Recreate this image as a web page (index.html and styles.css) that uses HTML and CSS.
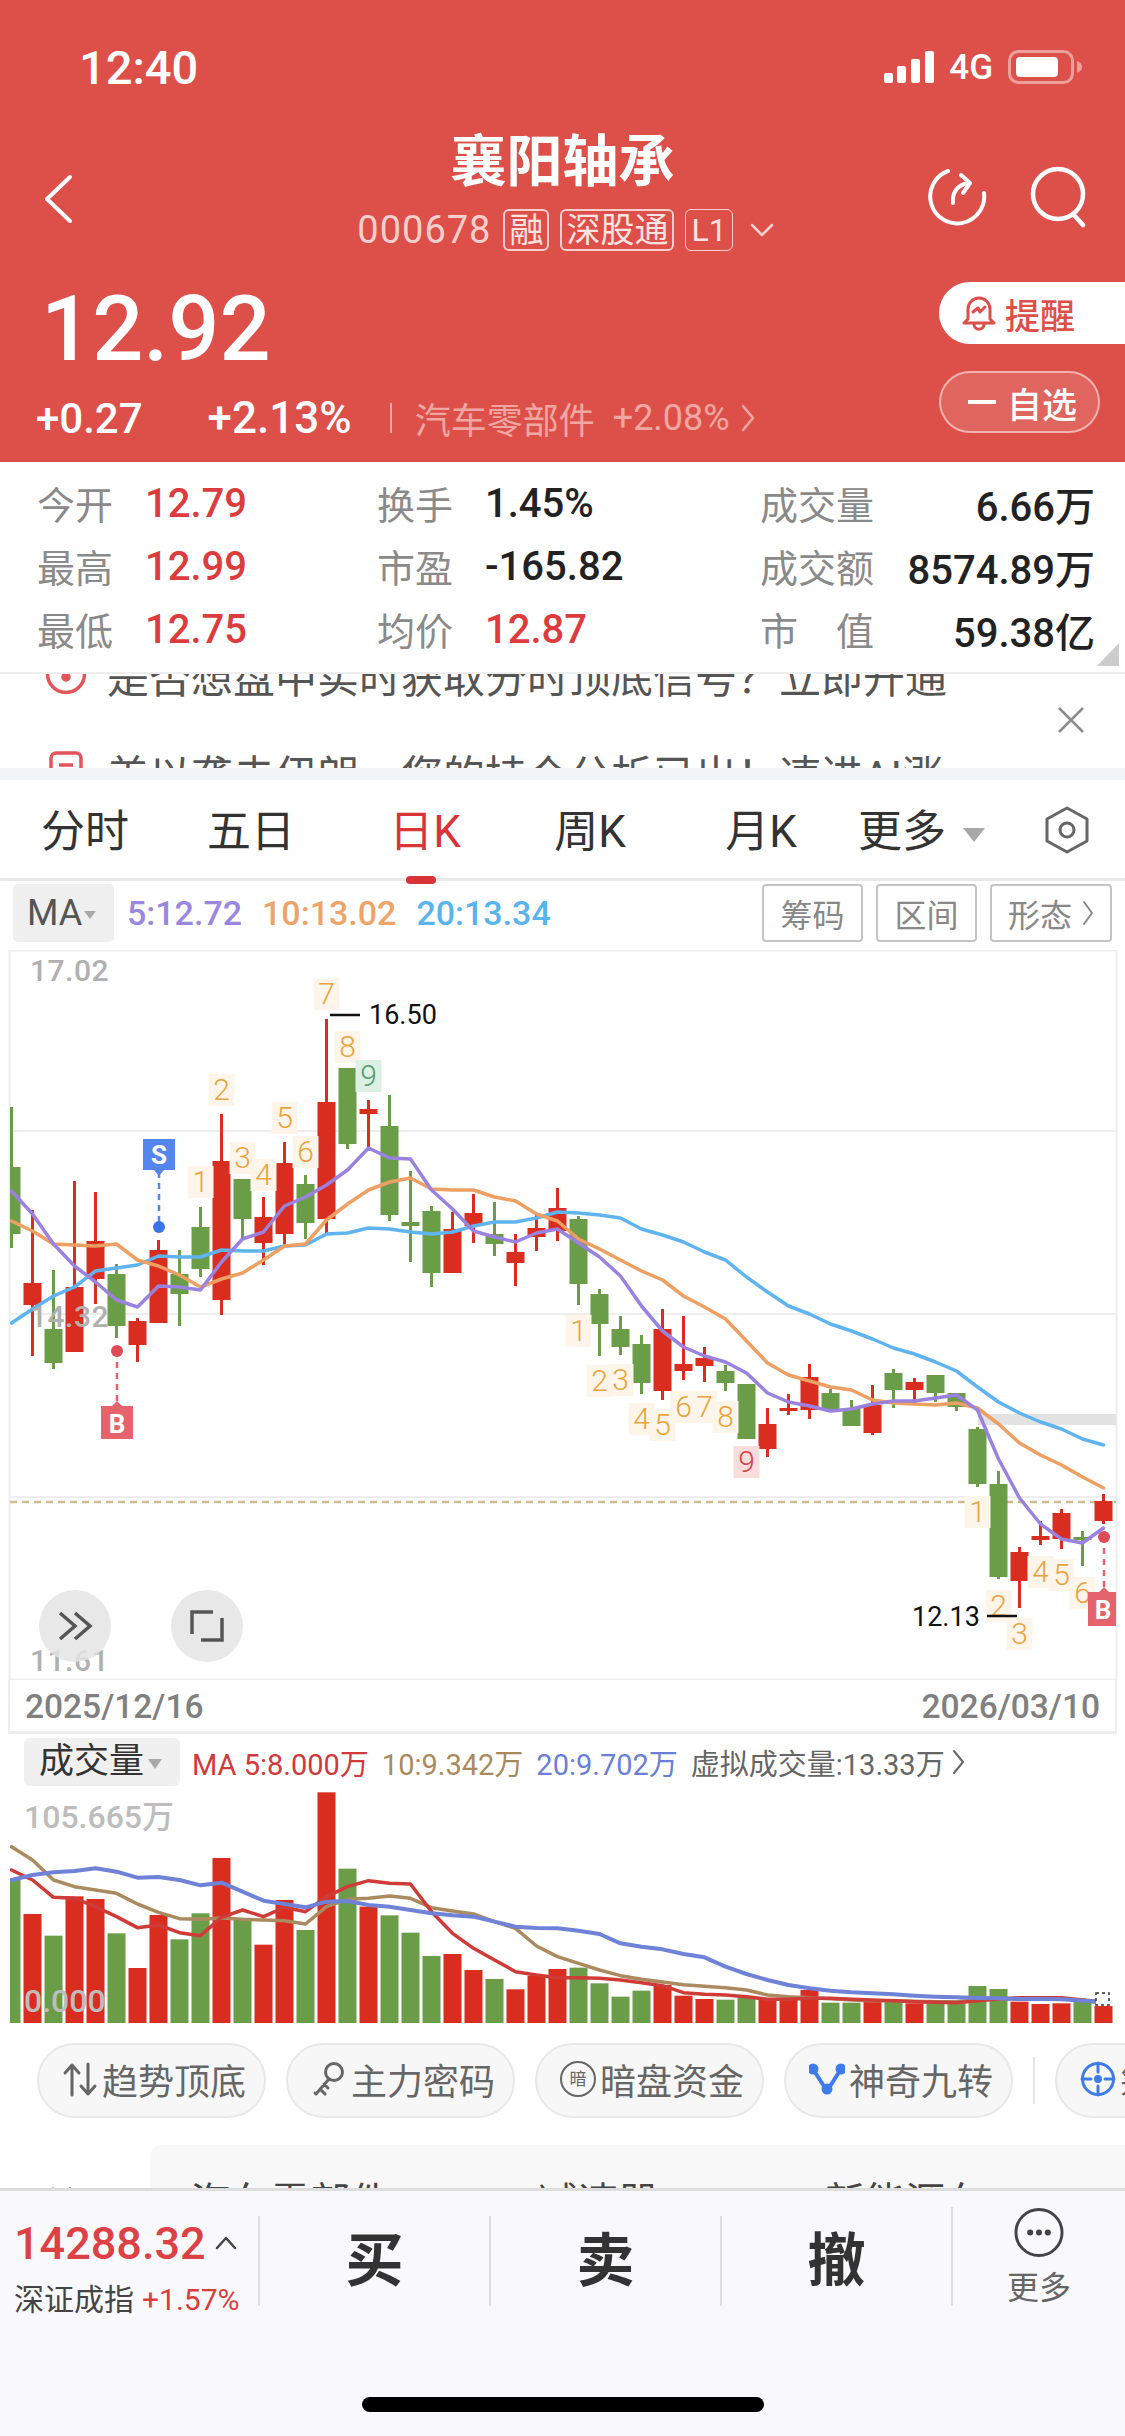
FILE: index.html
```html
<!DOCTYPE html>
<html lang="zh-CN">

<head>
    <meta charset="UTF-8">
    <meta name="viewport" content="width=device-width, initial-scale=1.0">
    <title>襄阳轴承</title>
    <link rel="stylesheet" href="styles.css">
</head>

<body>
    <div class="screen">
        <!-- Red header -->
        <header class="header">
            <div class="statusbar">
                <span class="clock">12:40</span>
                <div class="status-icons">
                    <svg width="50" height="32" viewBox="0 0 50 32" fill="#fff">
                        <rect x="0" y="22" width="9" height="10" rx="2" />
                        <rect x="13" y="15" width="9" height="17" rx="2" />
                        <rect x="27" y="8" width="9" height="24" rx="2" />
                        <rect x="41" y="0" width="9" height="32" rx="2" />
                    </svg>
                    <span class="network">4G</span>
                    <svg width="74" height="34" viewBox="0 0 74 34">
                        <rect x="1.5" y="1.5" width="63" height="31" rx="9" fill="none" stroke="#fff" stroke-opacity=".45" stroke-width="3" />
                        <rect x="8" y="7" width="42" height="20" rx="4" fill="#fff" />
                        <path d="M69 11c3 1 5 3 5 6s-2 5-5 6z" fill="#fff" fill-opacity=".45" />
                    </svg>
                </div>
            </div>

            <div class="navbar">
                <div class="nav-left">
                    <svg width="30" height="50" viewBox="0 0 30 50" fill="none" stroke="#fff" stroke-width="4" stroke-linecap="round" stroke-linejoin="round">
                        <path d="M27 3 4 25l23 22" />
                    </svg>
                </div>
                <div class="nav-title">
                    <h1 class="stock-name">襄阳轴承</h1>
                    <div class="stock-sub">
                        <span class="stock-code">000678</span>
                        <span class="tag">融</span>
                        <span class="tag">深股通</span>
                        <span class="tag tag-level">L1</span>
                        <svg width="24" height="14" viewBox="0 0 24 14" fill="none" stroke="#f6cfcc" stroke-width="2.5" stroke-linecap="round" stroke-linejoin="round">
                            <path d="M2 2l10 10L22 2" />
                        </svg>
                    </div>
                </div>
                <div class="nav-right">
                    <svg width="60" height="60" viewBox="0 0 60 60" fill="none" stroke="#fff" stroke-width="4" stroke-linecap="round" stroke-linejoin="round">
                        <path d="M21 5A27 27 0 1 0 57 27" />
                        <path d="M26 37c-1-10 4-18 15-20" />
                        <path d="M34 9l9 8-7 10" />
                    </svg>
                    <svg width="60" height="62" viewBox="0 0 60 62" fill="none" stroke="#fff" stroke-width="4.5" stroke-linecap="round">
                        <circle cx="29" cy="28" r="25" />
                        <path d="M44 48l10 11" />
                    </svg>
                </div>
            </div>

            <div class="quote">
                <div class="quote-main">
                    <div class="price">12.92</div>
                    <div class="change-row">
                        <span class="change">+0.27</span>
                        <span class="change change-pct">+2.13%</span>
                        <span class="sector-line"></span>
                        <span class="sector">汽车零部件</span>
                        <span class="sector-pct">+2.08%</span>
                        <svg width="14" height="28" viewBox="0 0 14 28" fill="none" stroke="#f0a7a3" stroke-width="2.5" stroke-linecap="round" stroke-linejoin="round">
                            <path d="M2 2l10 12L2 26" />
                        </svg>
                    </div>
                </div>
                <div class="quote-actions">
                    <button class="remind-btn">
                        <svg width="34" height="36" viewBox="0 0 34 36" fill="none" stroke="#dd5049" stroke-width="3" stroke-linecap="round" stroke-linejoin="round">
                            <path d="M6 24V14a11 11 0 0 1 22 0v10l4 4H2z" />
                            <path d="M12 29c0 7 10 7 10 0" />
                            <path d="M11 17l5-4 2 4 5-5" />
                        </svg>
                        提醒
                    </button>
                    <button class="watch-btn"><span class="watch-dash"></span>自选</button>
                </div>
            </div>
        </header>

        <!-- Quote numbers -->
        <section class="stats">
            <div class="stat"><span class="stat-label">今开</span><span class="stat-value up">12.79</span></div>
            <div class="stat"><span class="stat-label">换手</span><span class="stat-value">1.45%</span></div>
            <div class="stat stat-wide"><span class="stat-label">成交量</span><span class="stat-value">6.66万</span></div>
            <div class="stat"><span class="stat-label">最高</span><span class="stat-value up">12.99</span></div>
            <div class="stat"><span class="stat-label">市盈</span><span class="stat-value">-165.82</span></div>
            <div class="stat stat-wide"><span class="stat-label">成交额</span><span class="stat-value">8574.89万</span></div>
            <div class="stat"><span class="stat-label">最低</span><span class="stat-value up">12.75</span></div>
            <div class="stat"><span class="stat-label">均价</span><span class="stat-value up">12.87</span></div>
            <div class="stat stat-wide"><span class="stat-label stat-spread"><i>市</i><i>值</i></span><span class="stat-value">59.38亿</span></div>
            <span class="stats-corner"></span>
        </section>

        <!-- Scrolling notices, cut off top and bottom -->
        <section class="notices">
            <div class="notice-list">
                <div class="notice">
                    <svg width="42" height="42" viewBox="0 0 42 42" fill="none" stroke="#e2555a" stroke-width="3.5">
                        <circle cx="21" cy="21" r="18.5" />
                        <circle cx="21" cy="24" r="3" fill="#e2555a" />
                        <path d="M21 24 12 12M21 24l9-12" />
                    </svg>
                    <span>是否想盘中实时获取分时顶底信号？立即开通</span>
                </div>
                <div class="notice">
                    <svg width="42" height="42" viewBox="0 0 42 42" fill="none" stroke="#e2555a" stroke-width="3.5">
                        <rect x="6" y="2" width="30" height="38" rx="5" />
                        <path d="M14 14h14" />
                    </svg>
                    <span>美以袭击伊朗，您的持仓分析已出！速进AI涨</span>
                </div>
            </div>
            <svg class="notice-close" width="28" height="28" viewBox="0 0 28 28" fill="none" stroke="#8c8c8c" stroke-width="2.5">
                <path d="M2 2l24 24M26 2 2 26" />
            </svg>
        </section>

        <!-- Period tabs -->
        <nav class="tabs">
            <span class="tab">分时</span>
            <span class="tab">五日</span>
            <span class="tab active">日K</span>
            <span class="tab">周K</span>
            <span class="tab">月K</span>
            <span class="tab tab-more">更多<i class="caret caret-big"></i></span>
            <svg class="tab-gear" width="46" height="48" viewBox="0 0 46 48" fill="none" stroke="#666" stroke-width="3" stroke-linejoin="round">
                <path d="M23 2 43 13v22L23 46 3 35V13z" />
                <circle cx="23" cy="24" r="7" />
            </svg>
        </nav>

        <div class="ma-row">
            <span class="ma-pill">MA<i class="caret"></i></span>
            <span class="ma-value ma5">5:12.72</span>
            <span class="ma-value ma10">10:13.02</span>
            <span class="ma-value ma20">20:13.34</span>
            <div class="ma-tools">
                <span class="ma-tool">筹码</span>
                <span class="ma-tool">区间</span>
                <span class="ma-tool ma-tool-wide">形态
                    <svg width="12" height="26" viewBox="0 0 12 26" fill="none" stroke="#888" stroke-width="2" stroke-linecap="round" stroke-linejoin="round"><path d="M2 2l8 11L2 24" /></svg>
                </span>
            </div>
        </div>

        <!-- Candles -->
        <svg id="kline" class="chart" width="1125" height="730" viewBox="0 950 1125 730">
            <defs>
                <clipPath id="kline-clip"><rect x="10" y="950" width="1106" height="730" /></clipPath>
            </defs>
            <rect class="frame" x="9.5" y="950.5" width="1107" height="729" />
            <path class="grid" d="M10 1131H1116M10 1314H1116M10 1497H1116" />
            <rect class="band" x="978" y="1414" width="138" height="11" />
            <path class="last-price" d="M10 1502H1116" />
            <g id="kline-candles" clip-path="url(#kline-clip)"></g>
            <g id="kline-lines" clip-path="url(#kline-clip)"></g>
            <g id="kline-marks"></g>

            <text class="axis-label" x="30" y="981">17.02</text>
            <text class="axis-label" x="30" y="1327">14.32</text>
            <text class="axis-label" x="30" y="1671">11.61</text>

            <path class="extreme-tick" d="M330 1015H360M987 1616H1017" />
            <text class="extreme" x="369" y="1024">16.50</text>
            <text class="extreme" x="912" y="1626">12.13</text>

            <!-- S / B flags -->
            <path class="flag-line flag-line-s" d="M159 1172V1227" />
            <circle class="dot-s" cx="159" cy="1227" r="6" />
            <path class="flag-s" d="M143 1139H175V1170H164L159 1176 154 1170H143Z" />
            <text class="flag-text" x="159" y="1164">S</text>

            <path class="flag-line flag-line-b" d="M117 1351V1406" />
            <circle class="dot-b" cx="117" cy="1351" r="6" />
            <path class="flag-b" d="M101 1406H112L117 1401 122 1406H133V1439H101Z" />
            <text class="flag-text" x="117" y="1433">B</text>

            <path class="flag-line flag-line-b" d="M1104 1537V1592" />
            <circle class="dot-b" cx="1104" cy="1537" r="6" />
            <path class="flag-b" d="M1088 1592H1099L1104 1587 1109 1592H1116V1626H1088Z" />
            <text class="flag-text" x="1103" y="1619">B</text>

            <!-- Round buttons over the chart -->
            <ellipse class="round-btn" cx="75" cy="1626" rx="36" ry="36" />
            <path class="round-icon" d="M60 1613l15 13-15 13M75 1613l15 13-15 13" />
            <ellipse class="round-btn" cx="207" cy="1626" rx="36" ry="36" />
            <path class="round-icon" d="M213 1612H192V1634M201 1640H222V1618" />
        </svg>

        <div class="dates">
            <span>2025/12/16</span>
            <span>2026/03/10</span>
        </div>

        <!-- Volume -->
        <div class="vol-row">
            <span class="vol-pill">成交量<i class="caret"></i></span>
            <span class="vol-ma vol-ma5">MA 5:8.000万</span>
            <span class="vol-ma vol-ma10">10:9.342万</span>
            <span class="vol-ma vol-ma20">20:9.702万</span>
            <span class="vol-ma vol-virtual">虚拟成交量:13.33万</span>
            <svg width="14" height="26" viewBox="0 0 14 26" fill="none" stroke="#666" stroke-width="2" stroke-linecap="round" stroke-linejoin="round"><path d="M2 2l9 11-9 11" /></svg>
        </div>

        <svg id="volume" class="chart" width="1125" height="240" viewBox="0 1790 1125 240">
            <defs>
                <clipPath id="volume-clip"><rect x="10" y="1790" width="1106" height="240" /></clipPath>
            </defs>
            <g id="volume-bars" clip-path="url(#volume-clip)"></g>
            <g id="volume-lines" clip-path="url(#volume-clip)"></g>
            <text class="vol-axis" x="24" y="1828">105.665万</text>
            <text class="vol-axis" x="24" y="2012">0.000</text>
            <rect class="vol-end" x="1096" y="1993" width="13" height="12" />
        </svg>

        <div class="lower">
            <div class="chips">
                <span class="chip">
                    <svg width="36" height="36" viewBox="0 0 36 36" fill="none" stroke="#666" stroke-width="3" stroke-linecap="round" stroke-linejoin="round">
                        <path d="M10 34V5M3 12l7-8 7 8" />
                        <path d="M26 3v29M19 25l7 8 7-8" />
                    </svg>
                    趋势顶底
                </span>
                <span class="chip">
                    <svg width="36" height="36" viewBox="0 0 36 36" fill="none" stroke="#666" stroke-width="3" stroke-linecap="round" stroke-linejoin="round">
                        <circle cx="23" cy="11" r="8.5" />
                        <path d="M18 18 5 33M9 28l5 5M5 33l-1-1M13 23l4 4" />
                    </svg>
                    主力密码
                </span>
                <span class="chip">
                    <span class="chip-seal">暗</span>
                    暗盘资金
                </span>
                <span class="chip">
                    <svg width="36" height="36" viewBox="0 0 36 36" fill="none" stroke="#3f7ce8" stroke-width="4" stroke-linecap="round" stroke-linejoin="round">
                        <path d="M4 8l14 22L32 8" />
                        <circle cx="4" cy="8" r="3.5" fill="#3f7ce8" />
                        <circle cx="32" cy="8" r="3.5" fill="#3f7ce8" />
                        <circle cx="18" cy="28" r="3.5" fill="#3f7ce8" />
                    </svg>
                    神奇九转
                </span>
                <span class="chips-line"></span>
                <span class="chip">
                    <svg width="36" height="36" viewBox="0 0 36 36" fill="none" stroke="#3f7ce8" stroke-width="3" stroke-linecap="round">
                        <circle cx="18" cy="18" r="15.5" />
                        <path d="M18 2v9M18 25v9M2 18h9M25 18h9" />
                        <circle cx="18" cy="18" r="2.5" fill="#3f7ce8" />
                    </svg>
                    筹码分布
                </span>
            </div>
            <div class="related">
                <span class="related-title">所属</span>
                <div class="related-panel">
                    <span class="related-1">汽车零部件</span>
                    <span class="related-2">减速器</span>
                    <span class="related-3">新能源车</span>
                </div>
            </div>
        </div>

        <!-- Trade bar -->
        <footer class="tradebar">
            <div class="trade-row">
                <div class="index-box">
                    <div class="index-top">14288.32
                        <svg width="22" height="14" viewBox="0 0 22 14" fill="none" stroke="#444" stroke-width="2.5" stroke-linecap="round" stroke-linejoin="round"><path d="M2 12 11 2l9 10" /></svg>
                    </div>
                    <div class="index-bottom"><span>深证成指</span><span class="up">+1.57%</span></div>
                </div>
                <div class="trade-btn">买</div>
                <div class="trade-btn">卖</div>
                <div class="trade-btn">撤</div>
                <div class="trade-more">
                    <svg width="52" height="52" viewBox="0 0 52 52" fill="none" stroke="#444" stroke-width="3">
                        <circle cx="26" cy="26" r="23.5" />
                        <circle cx="17" cy="26" r="1.6" fill="#444" />
                        <circle cx="26" cy="26" r="1.6" fill="#444" />
                        <circle cx="35" cy="26" r="1.6" fill="#444" />
                    </svg>
                    <span>更多</span>
                </div>
            </div>
            <div class="home-bar"></div>
        </footer>
    </div>

    <script src="chart.js"></script>
</body>
</html>
```

FILE: styles.css
```css
* {
    box-sizing: border-box;
}

body {
    margin: 0;
    background-color: #fff;
    font-family: Roboto, "Noto Sans CJK SC", sans-serif;
}

i {
    font-style: normal;
}

.screen {
    width: 1125px;
    height: 2436px;
    overflow: hidden;
    display: flex;
    flex-direction: column;
}

.up {
    color: #dc3c3e;
}

.caret {
    display: inline-block;
    border-left: 7px solid transparent;
    border-right: 7px solid transparent;
    border-top: 10px solid #a8a8a8;
    margin-left: 5px;
    vertical-align: middle;
}

.caret-big {
    border-left-width: 11px;
    border-right-width: 11px;
    border-top-width: 14px;
    margin-left: 17px;
}

/* Header */
.header {
    height: 462px;
    flex: none;
    background-color: #dd5049;
    color: #fff;
}

.statusbar {
    height: 134px;
    display: flex;
    justify-content: space-between;
    align-items: center;
    padding: 0 43px 0 79px;
}

.clock {
    font-size: 47px;
    font-weight: 500;
}

.status-icons {
    display: flex;
    align-items: center;
    gap: 15px;
}

.network {
    font-size: 35px;
    font-weight: 500;
}

.navbar {
    height: 132px;
    display: grid;
    grid-template-columns: 1fr auto 1fr;
}

.nav-left {
    padding: 40px 0 0 43px;
}

.nav-right {
    display: flex;
    justify-content: flex-end;
    gap: 42px;
    padding: 32px 36px 0 0;
}

.nav-title {
    display: flex;
    flex-direction: column;
    align-items: center;
}

.stock-name {
    margin: 0;
    font-size: 56px;
    line-height: 56px;
    font-weight: 700;
}

.stock-sub {
    display: flex;
    align-items: center;
    gap: 11px;
    margin: 18px 0 0 6px;
    color: #f6cfcc;
}

.stock-code {
    margin-right: 1px;
    font-size: 38px;
    letter-spacing: 1px;
}

.tag {
    height: 42px;
    line-height: 38px;
    padding: 0 4px;
    border: 2px solid #f6cfcc;
    border-radius: 6px;
    font-size: 34px;
    color: #fbe3e1;
}

.tag-level {
    font-size: 32px;
    padding: 0 5px;
    border-width: 1px;
    line-height: 40px;
    margin-right: 6px;
}

.quote {
    height: 196px;
    display: flex;
    justify-content: space-between;
}

.quote-main {
    padding: 19px 0 0 36px;
}

.price {
    margin-left: 5px;
    font-size: 90px;
    line-height: 90px;
    font-weight: 500;
}

.change-row {
    display: flex;
    align-items: center;
    height: 46px;
    margin-top: 20px;
}

.change {
    font-size: 42px;
    font-weight: 500;
}

.change-pct {
    margin-left: 65px;
    font-size: 44px;
}

.sector-line {
    width: 2px;
    height: 30px;
    margin: 0 23px 0 38px;
    background-color: #f0a7a3;
}

.sector {
    font-size: 36px;
    color: #f0a7a3;
}

.sector-pct {
    margin: 0 11px 0 18px;
    font-size: 36px;
    color: #f0a7a3;
}

.quote-actions {
    width: 186px;
    padding-top: 16px;
}

.remind-btn,
.watch-btn {
    display: flex;
    align-items: center;
    height: 62px;
    padding: 0;
    font-family: inherit;
    font-size: 35px;
    font-weight: 500;
}

.remind-btn {
    width: 186px;
    gap: 9px;
    padding-left: 23px;
    border: none;
    border-radius: 31px 0 0 31px;
    background-color: #fff;
    color: #dd5049;
}

.watch-btn {
    width: 161px;
    margin-top: 27px;
    padding-left: 27px;
    border: 2px solid rgba(255, 255, 255, 0.5);
    border-radius: 31px;
    background-color: rgba(255, 255, 255, 0.12);
    color: #fff;
}

.watch-dash {
    width: 28px;
    height: 4px;
    margin-right: 11px;
    background-color: #fff;
}

/* Stats */
.stats {
    position: relative;
    height: 212px;
    flex: none;
    display: grid;
    grid-template-columns: 340px 383px 1fr;
    grid-auto-rows: 63px;
    padding: 10px 30px 0 37px;
    border-bottom: 2px solid #eee;
}

.stat {
    display: flex;
    align-items: center;
}

.stat-label {
    width: 108px;
    margin-top: -3px;
    font-size: 38px;
    color: #8a8a8a;
}

.stat-wide .stat-label {
    width: 114px;
}

.stat-spread {
    display: flex;
    justify-content: space-between;
}

.stat-value {
    font-size: 40px;
    font-weight: 500;
    color: #222;
}

.stat-value.up {
    color: #dc3c3e;
}

.stat-wide .stat-value {
    margin-left: auto;
}

.stats-corner {
    position: absolute;
    right: 6px;
    bottom: 6px;
    border-left: 22px solid transparent;
    border-bottom: 23px solid #ccc;
}

/* Notices */
.notices {
    position: relative;
    height: 94px;
    flex: none;
    overflow: hidden;
}

.notice-list {
    margin-top: -49px;
}

.notice {
    display: flex;
    align-items: center;
    gap: 20px;
    height: 98px;
    padding-left: 45px;
    font-size: 42px;
    color: #555;
    white-space: nowrap;
}

.notice-close {
    position: absolute;
    top: 32px;
    right: 40px;
}

/* Tabs */
.tabs {
    position: relative;
    height: 113px;
    flex: none;
    display: grid;
    grid-template-columns: 170px 162px 186px 144px 198px 1fr;
    align-items: center;
    padding-bottom: 3px;
    border-top: 12px solid #f2f3f5;
    border-bottom: 3px solid #e8e8e8;
    font-size: 44px;
    color: #333;
}

.tab {
    position: relative;
    text-align: center;
}

.tab.active {
    color: #d8343a;
}

.tab.active::after {
    content: "";
    position: absolute;
    left: 74px;
    bottom: -24px;
    width: 30px;
    height: 8px;
    border-radius: 4px;
    background-color: #d8343a;
}

.tab-more {
    margin-left: -2px;
    text-align: left;
}

.tab-gear {
    position: absolute;
    top: 26px;
    right: 35px;
}

.ma-row {
    height: 69px;
    flex: none;
    display: flex;
    align-items: center;
    padding: 0 13px 5px;
}

.ma-pill {
    width: 101px;
    height: 58px;
    line-height: 58px;
    padding-left: 14px;
    border-radius: 5px;
    background-color: #efefef;
    font-size: 36px;
    color: #555;
    white-space: nowrap;
}

.ma-pill .caret {
    margin-left: 2px;
    border-left-width: 6px;
    border-right-width: 6px;
    border-top-width: 8px;
}

.ma-value {
    font-size: 34px;
    font-weight: 500;
}

.ma5 {
    margin-left: 13px;
    color: #9a88e0;
}

.ma10 {
    margin-left: 20px;
    color: #eda46a;
}

.ma20 {
    margin-left: 20px;
    color: #58b4ec;
}

.ma-tools {
    display: flex;
    gap: 13px;
    margin-left: auto;
}

.ma-tool {
    display: flex;
    align-items: center;
    justify-content: center;
    gap: 10px;
    width: 101px;
    height: 58px;
    border: 2px solid #c4c4c4;
    border-radius: 4px;
    font-size: 32px;
    color: #888;
}

.ma-tool-wide {
    width: 122px;
}

/* Charts */
.chart {
    display: block;
    flex: none;
}

.frame {
    fill: none;
    stroke: #eee;
    stroke-width: 2;
}

.grid {
    fill: none;
    stroke: #eee;
    stroke-width: 2;
}

.band {
    fill: #e2e2e2;
}

.last-price {
    fill: none;
    stroke: #cdbb94;
    stroke-width: 2.5;
    stroke-dasharray: 7 5;
}

.wick-r,
.body-r {
    stroke: #d92d20;
    fill: #d92d20;
}

.wick-g,
.body-g {
    stroke: #6b9d49;
    fill: #6b9d49;
}

.wick-r,
.wick-g {
    stroke-width: 3;
}

.body-r,
.body-g {
    stroke: none;
}

.line {
    fill: none;
    stroke-width: 3.5;
    stroke-linejoin: round;
    stroke-linecap: round;
}

.line-ma5 {
    stroke: #9a82e0;
}

.line-ma10 {
    stroke: #ee9f62;
}

.line-ma20 {
    stroke: #5fb4f0;
}

.line-vol5 {
    stroke: #cf3b36;
}

.line-vol10 {
    stroke: #ab8a5f;
}

.line-vol20 {
    stroke: #6e82d8;
    stroke-width: 4;
}

.td-box {
    fill: #fdf5ea;
}

.td-num {
    fill: #eba33c;
    font-size: 30px;
    font-weight: 300;
    text-anchor: middle;
}

.td-green .td-box {
    fill: #dcf0e3;
}

.td-green .td-num {
    fill: #4f9f6e;
}

.td-red .td-box {
    fill: #fbdcdc;
}

.td-red .td-num {
    fill: #d6434a;
}

.axis-label {
    fill: #b0b0b0;
    font-size: 30px;
    font-weight: 500;
    letter-spacing: 0.5px;
}

.extreme {
    fill: #111;
    font-size: 27px;
}

.extreme-tick {
    stroke: #111;
    stroke-width: 2.5;
}

.flag-line {
    fill: none;
    stroke-width: 2.5;
    stroke-dasharray: 6 5;
}

.flag-line-s {
    stroke: #5585ee;
}

.flag-line-b {
    stroke: #e5636c;
}

.dot-s {
    fill: #3b74e8;
}

.dot-b {
    fill: #e04b58;
}

.flag-s {
    fill: #5585ee;
}

.flag-b {
    fill: #e5636c;
}

.flag-text {
    fill: #fff;
    font-size: 26px;
    font-weight: 700;
    text-anchor: middle;
}

.round-btn {
    fill: #e4e4e4;
    fill-opacity: 0.85;
}

.round-icon {
    fill: none;
    stroke: #555;
    stroke-width: 3.5;
}

.dates {
    height: 54px;
    flex: none;
    display: flex;
    justify-content: space-between;
    align-items: center;
    margin: 0 8px;
    padding: 2px 15px 0 15px;
    border: solid #eee;
    border-width: 0 2px 3px;
    font-size: 33.5px;
    font-weight: 500;
    color: #808080;
}

.vol-row {
    height: 56px;
    flex: none;
    display: flex;
    align-items: center;
    gap: 13px;
    padding: 0 0 0 24px;
}

.vol-pill {
    width: 156px;
    height: 48px;
    line-height: 48px;
    padding-left: 15px;
    border-radius: 6px;
    background-color: #f0f0f0;
    font-size: 35px;
    color: #333;
    white-space: nowrap;
}

.vol-pill .caret {
    margin-left: 4px;
}

.vol-ma {
    font-size: 29px;
    white-space: nowrap;
}

.vol-ma5 {
    margin-left: -1px;
    color: #d03a3a;
}

.vol-ma10 {
    color: #a98a5f;
}

.vol-ma20 {
    color: #6a7fd6;
}

.vol-virtual {
    color: #666;
}

.vol-row svg {
    margin-left: -6px;
}

.vol-bar-r {
    fill: #d92d20;
}

.vol-bar-g {
    fill: #6b9d49;
}

.vol-axis {
    fill: #bdbdbd;
    font-size: 32px;
    font-weight: 500;
}

.vol-end {
    fill: #fff;
    stroke: #333;
    stroke-width: 1.5;
    stroke-dasharray: 3 3;
}

/* Chips and what scrolls under the trade bar */
.lower {
    height: 158px;
    flex: none;
    overflow: hidden;
}

.chips {
    display: flex;
    align-items: center;
    gap: 20px;
    height: 88px;
    padding: 13px 0 0 37px;
    overflow: hidden;
}

.chip {
    flex: none;
    display: flex;
    align-items: center;
    gap: 4px;
    width: 229px;
    height: 75px;
    padding: 0 0 3px 23px;
    border: 2px solid #e8e8e8;
    border-radius: 38px;
    background-color: #f7f7f7;
    font-size: 36px;
    color: #666;
    white-space: nowrap;
}

.chip-seal {
    flex: none;
    width: 36px;
    height: 36px;
    line-height: 32px;
    border: 2px solid #666;
    border-radius: 50%;
    text-align: center;
    font-size: 17px;
}

.chips-line {
    flex: none;
    width: 2px;
    height: 47px;
    background-color: #e5e5e5;
}

.related {
    display: flex;
    margin-top: 27px;
    padding-left: 37px;
}

.related-title {
    width: 113px;
    padding-top: 30px;
    font-size: 38px;
    font-weight: 700;
    color: #222;
}

.related-panel {
    flex: 1;
    display: flex;
    height: 120px;
    padding: 25px 0 0 40px;
    border-radius: 12px 0 0 12px;
    background-color: #f8f8f8;
    font-size: 40px;
    color: #444;
}

.related-1 {
    width: 348px;
}

.related-2 {
    width: 287px;
}

/* Trade bar */
.tradebar {
    flex: 1;
    border-top: 3px solid #ddd;
    background-color: #f9f9fb;
}

.trade-row {
    display: flex;
    height: 90px;
    margin-top: 25px;
}

.index-box {
    width: 258px;
    padding-left: 14px;
    white-space: nowrap;
}

.index-top {
    display: flex;
    align-items: center;
    gap: 9px;
    height: 46px;
    margin-top: 4px;
    font-size: 45px;
    font-weight: 500;
    color: #dc4245;
}

.index-bottom {
    display: flex;
    gap: 8px;
    line-height: 34px;
    margin-top: 17px;
    font-size: 30px;
    color: #444;
}

.trade-btn {
    width: 231px;
    line-height: 90px;
    border-left: 2px solid #ddd;
    text-align: center;
    font-size: 58px;
    font-weight: 700;
    color: #333;
}

.trade-more {
    flex: 1;
    display: flex;
    flex-direction: column;
    align-items: center;
    gap: 12px;
    margin-top: -9px;
    border-left: 2px solid #ddd;
    font-size: 32px;
    line-height: 36px;
    color: #666;
}

.home-bar {
    width: 402px;
    height: 15px;
    margin: 91px auto 0;
    border-radius: 8px;
    background-color: #000;
}
```

FILE: chart.js
```js
const SVG_NS = "http://www.w3.org/2000/svg";

// [wick top, wick bottom, body top, body bottom, colour]
const candles = [
    [1107, 1248, 1167, 1234, "g"], [1210, 1356, 1283, 1305, "r"], [1270, 1369, 1329, 1363, "g"],
    [1181, 1352, 1287, 1352, "r"], [1192, 1304, 1241, 1279, "r"], [1264, 1338, 1274, 1326, "g"],
    [1318, 1362, 1321, 1345, "r"], [1240, 1323, 1250, 1323, "r"], [1250, 1326, 1274, 1294, "g"],
    [1207, 1277, 1227, 1269, "g"], [1114, 1315, 1161, 1300, "r"], [1179, 1240, 1179, 1219, "g"],
    [1197, 1265, 1217, 1243, "r"], [1142, 1245, 1163, 1234, "r"], [1175, 1239, 1184, 1223, "g"],
    [1019, 1234, 1102, 1219, "r"], [1068, 1149, 1068, 1144, "g"], [1100, 1148, 1109, 1114, "r"],
    [1095, 1221, 1126, 1215, "g"], [1171, 1262, 1222, 1226, "g"], [1206, 1287, 1211, 1273, "g"],
    [1212, 1273, 1229, 1273, "r"], [1194, 1243, 1213, 1226, "r"], [1202, 1256, 1234, 1244, "g"],
    [1234, 1286, 1252, 1263, "r"], [1214, 1251, 1228, 1237, "r"], [1188, 1241, 1208, 1231, "r"],
    [1216, 1305, 1219, 1284, "g"], [1289, 1356, 1294, 1324, "g"], [1316, 1355, 1329, 1347, "g"],
    [1335, 1394, 1344, 1383, "g"], [1309, 1400, 1329, 1391, "r"], [1316, 1380, 1364, 1371, "r"],
    [1347, 1382, 1358, 1366, "r"], [1365, 1391, 1371, 1383, "g"], [1384, 1439, 1384, 1439, "g"],
    [1408, 1457, 1424, 1449, "r"], [1394, 1415, 1408, 1411, "r"], [1364, 1419, 1377, 1410, "r"],
    [1389, 1411, 1393, 1410, "g"], [1400, 1426, 1408, 1426, "g"], [1385, 1435, 1405, 1433, "r"],
    [1369, 1408, 1373, 1390, "g"], [1378, 1404, 1382, 1390, "r"], [1375, 1402, 1375, 1393, "g"],
    [1393, 1411, 1393, 1407, "g"], [1427, 1487, 1429, 1484, "g"], [1471, 1579, 1484, 1577, "g"],
    [1547, 1608, 1552, 1581, "r"], [1521, 1545, 1536, 1540, "r"], [1509, 1549, 1513, 1539, "r"],
    [1531, 1566, 1537, 1540, "g"], [1494, 1524, 1501, 1521, "r"]
];

const ma5 = [1191, 1214, 1244, 1266, 1282, 1300, 1307, 1286, 1287, 1290, 1262, 1239, 1232, 1206, 1197, 1185, 1170, 1148,
    1158, 1159, 1190, 1209, 1231, 1237, 1242, 1233, 1229, 1243, 1257, 1276, 1306, 1331, 1347, 1356, 1362, 1373, 1393,
    1402, 1406, 1411, 1409, 1404, 1401, 1401, 1398, 1395, 1410, 1459, 1498, 1524, 1539, 1543, 1528];
const ma10 = [1221, 1231, 1244, 1245, 1246, 1244, 1260, 1266, 1275, 1287, 1279, 1273, 1260, 1246, 1244, 1220, 1204, 1190,
    1182, 1178, 1189, 1190, 1190, 1197, 1201, 1214, 1221, 1239, 1249, 1260, 1271, 1280, 1296, 1307, 1319, 1341, 1363,
    1375, 1381, 1387, 1390, 1400, 1403, 1404, 1405, 1403, 1408, 1424, 1443, 1455, 1465, 1477, 1488];
const ma20 = [1323, 1309, 1296, 1287, 1271, 1268, 1265, 1256, 1257, 1257, 1250, 1251, 1251, 1246, 1245, 1234, 1233, 1228,
    1229, 1232, 1234, 1232, 1226, 1222, 1222, 1218, 1212, 1213, 1215, 1218, 1229, 1235, 1242, 1252, 1260, 1277, 1292,
    1306, 1314, 1324, 1331, 1339, 1348, 1354, 1362, 1371, 1387, 1402, 1413, 1422, 1429, 1439, 1445];

// [candle index, y centre, number, tone]
const tdMarks = [
    [15, 994, 7], [16, 1047, 8], [17, 1076, 9, "green"], [10, 1090, 2], [9, 1182, 1], [11, 1158, 3], [12, 1175, 4],
    [13, 1118, 5], [14, 1152, 6], [27, 1331, 1], [28, 1381, 2], [29, 1380, 3], [30, 1419, 4], [31, 1425, 5],
    [32, 1407, 6], [33, 1407, 7], [34, 1417, 8], [35, 1462, 9, "red"], [46, 1512, 1], [47, 1606, 2], [48, 1634, 3],
    [49, 1572, 4], [50, 1575, 5], [51, 1593, 6]
];

// bar tops and volume averages, y counted from the volume chart's 1680 line at 3 units per px
const volTops = [600, 702, 767, 649, 657, 760, 864, 705, 778, 700, 534, 720, 794, 660, 750, 337, 566, 680, 706, 758, 828,
    822, 870, 897, 928, 887, 867, 863, 910, 950, 932, 915, 947, 957, 959, 950, 957, 957, 930, 968, 968, 960, 960, 970,
    970, 970, 918, 927, 965, 972, 970, 965, 978];
const vol5 = [570, 600, 652, 655, 680, 710, 743, 735, 758, 767, 712, 690, 710, 682, 695, 650, 620, 602, 610, 612, 695,
    760, 805, 840, 875, 885, 893, 893, 895, 900, 908, 917, 938, 943, 945, 950, 958, 958, 955, 955, 958, 960, 962, 965,
    967, 968, 962, 957, 953, 953, 953, 960, 970];
const vol10 = [500, 540, 600, 620, 630, 640, 672, 697, 716, 718, 714, 718, 720, 722, 732, 680, 658, 655, 648, 655, 683,
    693, 702, 725, 745, 798, 830, 850, 870, 887, 898, 906, 914, 919, 923, 930, 945, 950, 953, 956, 960, 962, 962, 964,
    965, 965, 960, 957, 957, 957, 957, 960, 965];
const vol20 = [600, 585, 577, 573, 565, 575, 593, 591, 600, 616, 608, 635, 662, 672, 682, 665, 663, 675, 680, 690, 700,
    706, 710, 725, 740, 744, 745, 752, 762, 790, 800, 808, 822, 832, 860, 882, 900, 915, 925, 932, 937, 940, 943, 947,
    950, 952, 954, 955, 957, 957, 958, 962, 965];

function xOf(i) {
    return 11.5 + 21 * i;
}

function volY(v) {
    return 1680 + v / 3;
}

function add(parent, tag, attrs, text) {
    const el = document.createElementNS(SVG_NS, tag);
    for (const key in attrs) {
        el.setAttribute(key, attrs[key]);
    }
    if (text !== undefined) {
        el.textContent = text;
    }
    parent.appendChild(el);
    return el;
}

function drawLine(parent, values, className, toY) {
    const points = values.map((v, i) => `${xOf(i)},${toY ? toY(v) : v}`).join(" ");
    add(parent, "polyline", { points: points, class: `line ${className}` });
}

const candleGroup = document.getElementById("kline-candles");
candles.forEach(([high, low, top, bottom, color], i) => {
    const x = xOf(i);
    add(candleGroup, "line", { x1: x, x2: x, y1: high, y2: low, class: `wick-${color}` });
    add(candleGroup, "rect", { x: x - 9, y: top, width: 18, height: bottom - top, class: `body-${color}` });
});

const lineGroup = document.getElementById("kline-lines");
drawLine(lineGroup, ma20, "line-ma20");
drawLine(lineGroup, ma10, "line-ma10");
drawLine(lineGroup, ma5, "line-ma5");

const markGroup = document.getElementById("kline-marks");
tdMarks.forEach(([i, y, num, tone]) => {
    const g = add(markGroup, "g", tone ? { class: `td-${tone}` } : {});
    add(g, "rect", { x: xOf(i) - 13, y: y - 16, width: 26, height: 32, class: "td-box" });
    add(g, "text", { x: xOf(i), y: y + 10, class: "td-num" }, num);
});

const barGroup = document.getElementById("volume-bars");
volTops.forEach((top, i) => {
    const y = volY(top);
    add(barGroup, "rect", { x: xOf(i) - 9, y: y, width: 18, height: 2023 - y, class: `vol-bar-${candles[i][4]}` });
});

const volLines = document.getElementById("volume-lines");
drawLine(volLines, vol10, "line-vol10", volY);
drawLine(volLines, vol5, "line-vol5", volY);
drawLine(volLines, vol20, "line-vol20", volY);
```
